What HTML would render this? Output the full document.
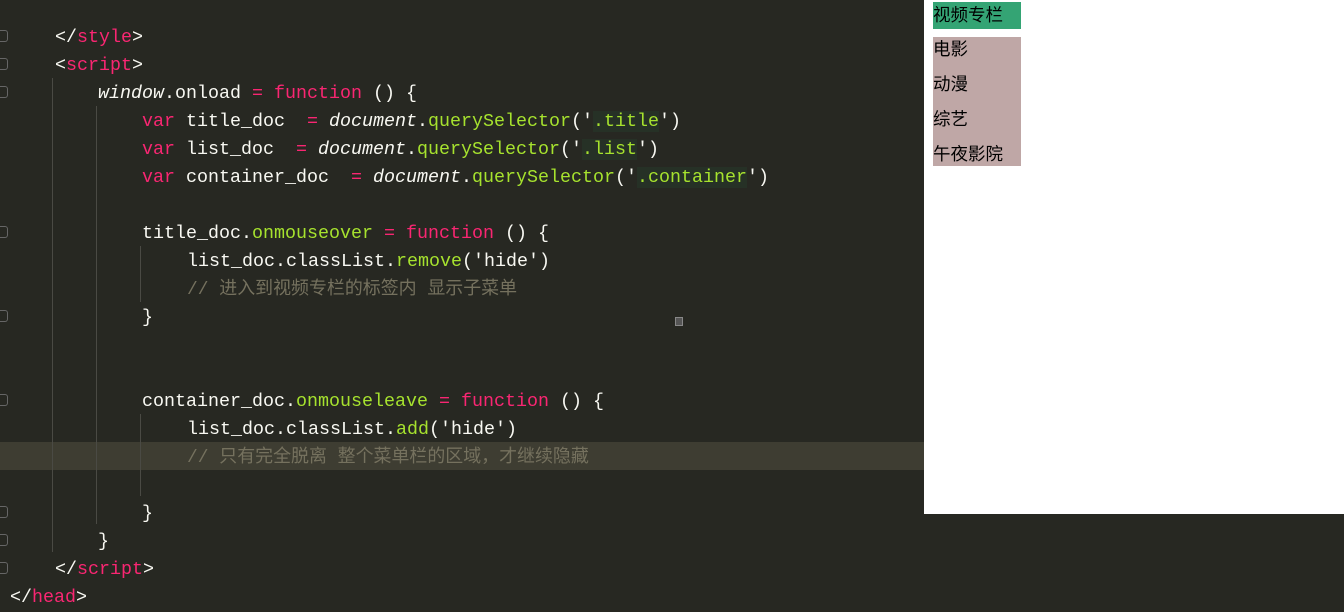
<!DOCTYPE html>
<html><head><meta charset="utf-8"><style>
body{margin:0;width:1344px;height:596px;background:#272822;overflow:hidden;position:relative;font-family:"Liberation Mono","Noto Sans CJK SC",monospace;font-size:18.33px;color:#f8f8f2}
.l{position:absolute;left:0;height:28px;line-height:28px;white-space:pre;margin-top:2px}
.k{color:#f92672}.f{color:#a6e22e}.i{font-style:italic}.c{color:#75715e;font-size:17.95px}.s{color:#e6db74}
.h{background:#263126}
.g{position:absolute;width:1px;background:#4a4a44}
.fold{position:absolute;left:0;width:7px;height:10px;border:1px solid #666;border-left:none;border-radius:0 3px 3px 0}
.br{position:absolute;left:924px;top:0;width:420px;height:514px;background:#fff;font-family:"Noto Sans CJK SC",sans-serif;font-size:17.5px;color:#000}
</style></head><body>
<div style="position:absolute;left:0;top:442px;width:924px;height:28px;background:#3e3d32"></div>
<div class="g" style="left:52px;top:78px;height:474px"></div>
<div class="g" style="left:96px;top:106px;height:418px"></div>
<div class="g" style="left:140px;top:246px;height:56px"></div>
<div class="g" style="left:140px;top:414px;height:82px"></div>
<div class="fold" style="top:30px"></div><div class="fold" style="top:58px"></div><div class="fold" style="top:86px"></div><div class="fold" style="top:226px"></div><div class="fold" style="top:310px"></div><div class="fold" style="top:394px"></div><div class="fold" style="top:506px"></div><div class="fold" style="top:534px"></div><div class="fold" style="top:562px"></div>
<div class="l" style="top:22px;left:55px">&lt;/<span class="k">style</span>&gt;</div>
<div class="l" style="top:50px;left:55px">&lt;<span class="k">script</span>&gt;</div>
<div class="l" style="top:78px;left:98px"><span class="i">window</span>.onload <span class="k">=</span> <span class="k">function</span> () {</div>
<div class="l" style="top:106px;left:142px"><span class="k">var</span> title_doc  <span class="k">=</span> <span class="i">document</span>.<span class="f">querySelector</span>('<span class="h f">.title</span>')</div>
<div class="l" style="top:134px;left:142px"><span class="k">var</span> list_doc  <span class="k">=</span> <span class="i">document</span>.<span class="f">querySelector</span>('<span class="h f">.list</span>')</div>
<div class="l" style="top:162px;left:142px"><span class="k">var</span> container_doc  <span class="k">=</span> <span class="i">document</span>.<span class="f">querySelector</span>('<span class="h f">.container</span>')</div>
<div class="l" style="top:218px;left:142px">title_doc.<span class="f">onmouseover</span> <span class="k">=</span> <span class="k">function</span> () {</div>
<div class="l" style="top:246px;left:187px">list_doc.classList.<span class="f">remove</span>('hide')</div>
<div class="l c" style="top:274px;left:187px">// 进入到视频专栏的标签内 显示子菜单</div>
<div class="l" style="top:302px;left:142px">}</div>
<div class="l" style="top:386px;left:142px">container_doc.<span class="f">onmouseleave</span> <span class="k">=</span> <span class="k">function</span> () {</div>
<div class="l" style="top:414px;left:187px">list_doc.classList.<span class="f">add</span>('hide')</div>
<div class="l c" style="top:442px;left:187px">// 只有完全脱离 整个菜单栏的区域，才继续隐藏</div>
<div class="l" style="top:498px;left:142px">}</div>
<div class="l" style="top:526px;left:98px">}</div>
<div class="l" style="top:554px;left:55px">&lt;/<span class="k">script</span>&gt;</div>
<div class="l" style="top:582px;left:10px">&lt;/<span class="k">head</span>&gt;</div>
<div style="position:absolute;left:675px;top:317px;width:6px;height:7px;border:1px solid #888;background:#555"></div>
<div class="br">
<div style="position:absolute;left:9px;top:2px;width:88px;height:27px;background:#34a474;line-height:25px">视频专栏</div>
<div style="position:absolute;left:9px;top:37px;width:88px;height:129px;background:#bfa7a6">
<div style="height:35px;line-height:24px">电影</div><div style="height:35px;line-height:24px">动漫</div><div style="height:35px;line-height:24px">综艺</div><div style="line-height:24px">午夜影院</div></div>
</div>
</body></html>
